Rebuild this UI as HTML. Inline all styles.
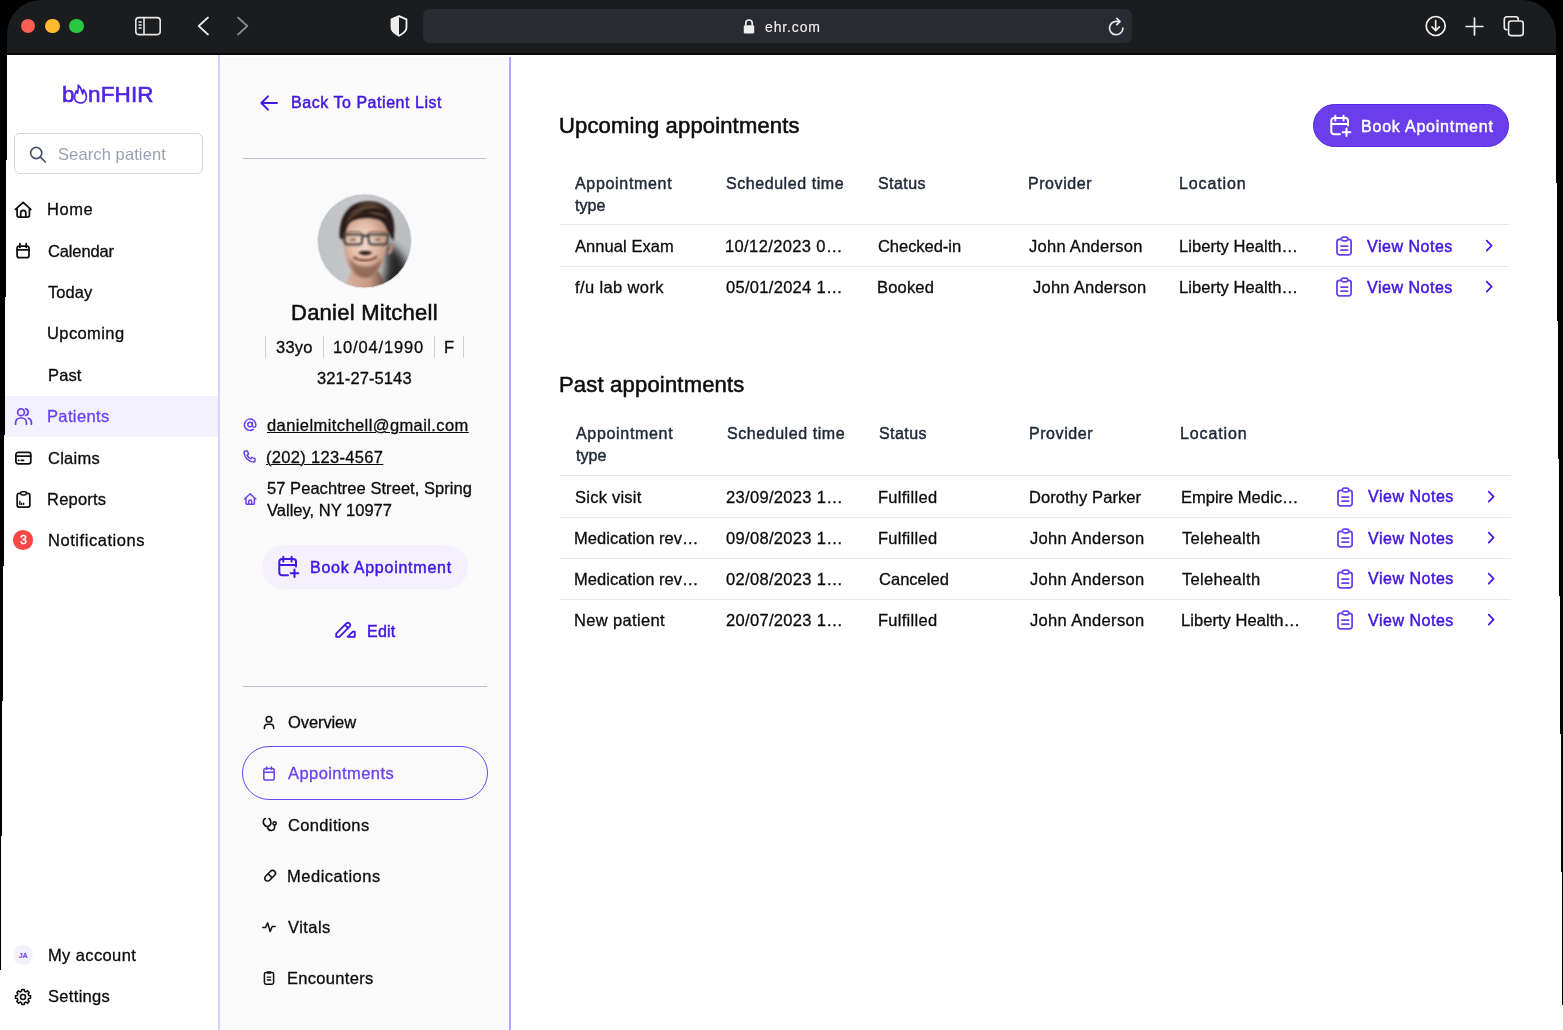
<!DOCTYPE html>
<html><head><meta charset="utf-8"><title>EHR</title>
<style>
html,body{margin:0;padding:0;}
body{width:1563px;height:1030px;overflow:hidden;background:#000;position:relative;font-family:"Liberation Sans",sans-serif;}
.a{position:absolute;}
.t{position:absolute;white-space:nowrap;will-change:transform;}
svg.a{overflow:visible;}
</style></head><body>
<div class="a" style="left:7px;top:0px;width:1549px;height:55px;background:#1b1c1e;border-radius:34px 34px 0 0;"></div>
<div class="a" style="left:7px;top:53px;width:1549px;height:2px;background:#0b0b0c;"></div>
<div class="a" style="left:20.5px;top:18.5px;width:14.8px;height:14.8px;border-radius:50%;background:#fe5f57;"></div>
<div class="a" style="left:44.8px;top:18.5px;width:14.8px;height:14.8px;border-radius:50%;background:#febc2e;"></div>
<div class="a" style="left:69.1px;top:18.5px;width:14.8px;height:14.8px;border-radius:50%;background:#28c840;"></div>
<svg class="a" style="left:134px;top:16px;" width="28" height="20" viewBox="0 0 28 20" fill="none"><rect x="1.8" y="1.6" width="24.4" height="17" rx="3" stroke="#e6e6e6" stroke-width="1.6"/><line x1="10" y1="1.6" x2="10" y2="18.6" stroke="#e6e6e6" stroke-width="1.6"/><path d="M4.6 6h3M4.6 9h3M4.6 12h3" stroke="#e6e6e6" stroke-width="1.3"/></svg>
<svg class="a" style="left:194px;top:14px;" width="20" height="24" viewBox="0 0 20 24" fill="none"><path d="M14 3.5 L4.7 12 L14 20.5" stroke="#e8e8e8" stroke-width="1.7" stroke-linecap="round" stroke-linejoin="round"/></svg>
<svg class="a" style="left:232px;top:14px;" width="20" height="24" viewBox="0 0 20 24" fill="none"><path d="M6 3.5 L15.3 12 L6 20.5" stroke="#8a8a8c" stroke-width="1.7" stroke-linecap="round" stroke-linejoin="round"/></svg>
<svg class="a" style="left:389px;top:14px;" width="20" height="24" viewBox="0 0 20 24" fill="none"><path d="M10 2.2 L17.5 5.3 V13.5 C17.5 17 14.5 19.5 10 21.8 C5.5 19.5 2.5 17 2.5 13.5 V5.3 Z" stroke="#f2f2f2" stroke-width="1.8" stroke-linejoin="round"/><path d="M10 2.2 L2.5 5.3 V13.5 C2.5 17 5.5 19.5 10 21.8 Z" fill="#ececec"/></svg>
<div class="a" style="left:423px;top:9.2px;width:709px;height:33.8px;background:#2a2b30;border-radius:7px;"></div>
<svg class="a" style="left:742px;top:18px;" width="14" height="17" viewBox="0 0 14 17" fill="none"><path d="M3.8 7.5 V5.2 A3.2 3.2 0 0 1 10.2 5.2 V7.5" stroke="#eee" stroke-width="1.7"/><rect x="1.8" y="7.2" width="10.4" height="8.4" rx="1.4" fill="#efefef"/></svg>
<div class="t " style="left:764.98px;top:20.45px;font-size:14px;line-height:14px;font-weight:400;color:#f0f0f0;-webkit-text-stroke:0.15px #f0f0f0;letter-spacing:0.869px;">ehr.com</div>
<svg class="a" style="left:1106.2px;top:15.3px;" width="22" height="22" viewBox="0 0 22 22" fill="none"><path d="M16.9 13.2 A6.7 6.7 0 1 1 11.2 6.4 L13.5 6.4" stroke="#e8e8e8" stroke-width="1.7" stroke-linecap="round"/><path d="M10.8 3.4 L14 6.5 L10.8 9.6" stroke="#e8e8e8" stroke-width="1.7" stroke-linecap="round" stroke-linejoin="round"/></svg>
<svg class="a" style="left:1424px;top:14px;" width="24" height="24" viewBox="0 0 24 24" fill="none"><circle cx="11.7" cy="12" r="9.5" stroke="#f0f0f0" stroke-width="1.7"/><path d="M11.7 6.5 V16.4 M8 12.9 L11.7 16.6 L15.4 12.9" stroke="#f0f0f0" stroke-width="1.6" stroke-linecap="round" stroke-linejoin="round"/></svg>
<svg class="a" style="left:1464px;top:16px;" width="22" height="22" viewBox="0 0 22 22" fill="none"><path d="M10.5 2.2 V19 M2.1 10.5 H18.9" stroke="#f0f0f0" stroke-width="1.7" stroke-linecap="round"/></svg>
<svg class="a" style="left:1500px;top:12px;" width="28" height="28" viewBox="0 0 28 28" fill="none"><path d="M7.5 17.8 H6.8 A2.5 2.5 0 0 1 4.3 15.3 V7.3 A2.5 2.5 0 0 1 6.8 4.8 H15.7 A2.5 2.5 0 0 1 18.2 7.3 V8.5" stroke="#eee" stroke-width="1.6"/><rect x="8.6" y="9" width="14.6" height="14.6" rx="2.5" stroke="#eee" stroke-width="1.6"/></svg>
<div class="a" style="left:0px;top:55px;width:1563px;height:975px;background:#ffffff;"></div>
<div class="a" style="left:219.5px;top:57px;width:287.5px;height:973px;background:#fafafa;"></div>
<div class="a" style="left:218px;top:55px;width:1.5px;height:975px;background:#dbd1fc;"></div>
<div class="a" style="left:509px;top:57px;width:1.6px;height:973px;background:#b7a2fb;"></div>
<div class="a" style="left:0px;top:395.6px;width:218px;height:41.3px;background:#f4f1fe;"></div>
<div class="t " style="left:61.60px;top:83.55px;font-size:22.5px;line-height:22.5px;font-weight:400;color:#4f23e6;-webkit-text-stroke:0.6px #4f23e6;">b</div>
<svg class="a" style="left:70px;top:80px;" width="22" height="28" viewBox="0 0 22 28" fill="none"><path d="M10.3 23 C6.8 23 4.6 20.6 4.6 17.6 C4.6 15 5.4 12.9 6.3 10.8 L7.5 13.2 C8.2 10.6 8.4 7.8 8.2 5 C10.6 7.4 12.1 10.4 12.7 14 L13.6 9.6 C15.4 11.6 16.4 14.2 16.4 17 C16.4 20.6 13.8 23 10.3 23 Z" stroke="#4f23e6" stroke-width="1.6" stroke-linejoin="round"/><path d="M6.3 10.8 L7.5 13.2 C8.2 10.6 8.4 7.8 8.2 5 C8.4 8.8 7.6 12.2 5.6 15.2 Z" fill="#4f23e6"/></svg>
<div class="t " style="left:88.40px;top:83.55px;font-size:22.5px;line-height:22.5px;font-weight:400;color:#4f23e6;-webkit-text-stroke:0.6px #4f23e6;letter-spacing:0.136px;">nFHIR</div>
<div class="a" style="left:13.5px;top:133.4px;width:189.3px;height:40.4px;box-sizing:border-box;border:1.3px solid #d0d5dd;border-radius:6px;background:#fff;"></div>
<svg class="a" style="left:26px;top:146px;" width="24" height="20" viewBox="0 0 24 20" fill="none"><circle cx="10.2" cy="7" r="5.6" stroke="#475467" stroke-width="1.7"/><path d="M14.4 11.2 L19.2 16" stroke="#475467" stroke-width="1.7" stroke-linecap="round"/></svg>
<div class="t " style="left:57.70px;top:145.63px;font-size:16.5px;line-height:16.5px;font-weight:400;color:#98a2b3;letter-spacing:0.106px;">Search patient</div>
<div class="t " style="left:47.45px;top:201.43px;font-size:16.5px;line-height:16.5px;font-weight:400;color:#0b0b0d;-webkit-text-stroke:0.3px #0b0b0d;letter-spacing:0.521px;">Home</div>
<div class="t " style="left:48.15px;top:242.93px;font-size:16.5px;line-height:16.5px;font-weight:400;color:#0b0b0d;-webkit-text-stroke:0.3px #0b0b0d;letter-spacing:-0.138px;">Calendar</div>
<div class="t " style="left:47.85px;top:284.23px;font-size:16.5px;line-height:16.5px;font-weight:400;color:#0b0b0d;-webkit-text-stroke:0.3px #0b0b0d;letter-spacing:0.030px;">Today</div>
<div class="t " style="left:47.15px;top:325.33px;font-size:16.5px;line-height:16.5px;font-weight:400;color:#0b0b0d;-webkit-text-stroke:0.3px #0b0b0d;letter-spacing:0.399px;">Upcoming</div>
<div class="t " style="left:47.55px;top:367.03px;font-size:16.5px;line-height:16.5px;font-weight:400;color:#0b0b0d;-webkit-text-stroke:0.3px #0b0b0d;letter-spacing:0.123px;">Past</div>
<div class="t " style="left:47.25px;top:408.33px;font-size:16.5px;line-height:16.5px;font-weight:400;color:#6941f0;-webkit-text-stroke:0.3px #6941f0;letter-spacing:0.362px;">Patients</div>
<div class="t " style="left:48.15px;top:449.53px;font-size:16.5px;line-height:16.5px;font-weight:400;color:#0b0b0d;-webkit-text-stroke:0.3px #0b0b0d;letter-spacing:0.246px;">Claims</div>
<div class="t " style="left:47.15px;top:490.93px;font-size:16.5px;line-height:16.5px;font-weight:400;color:#0b0b0d;-webkit-text-stroke:0.3px #0b0b0d;letter-spacing:0.213px;">Reports</div>
<div class="t " style="left:47.85px;top:531.93px;font-size:16.5px;line-height:16.5px;font-weight:400;color:#0b0b0d;-webkit-text-stroke:0.3px #0b0b0d;letter-spacing:0.548px;">Notifications</div>
<svg class="a" style="left:13px;top:200px;" width="20" height="20" viewBox="0 0 20 20" fill="none"><path d="M2.4 9.4 L10.2 2.4 L17.8 9.4 M4.1 7.9 V15.3 A1.8 1.8 0 0 0 5.9 17.1 H14.6 A1.8 1.8 0 0 0 16.4 15.3 V7.9 M7.7 17.1 V12.8 A2.55 2.55 0 0 1 12.8 12.8 V17.1" stroke="#101010" stroke-width="1.75" stroke-linecap="round" stroke-linejoin="round"/></svg>
<svg class="a" style="left:13px;top:241px;" width="20" height="20" viewBox="0 0 20 20" fill="none"><rect x="4.1" y="5" width="11.9" height="11.7" rx="2.2" stroke="#101010" stroke-width="1.75"/><path d="M4.1 8.9 H16 M6.9 2.6 V6.4 M13.2 2.6 V6.4" stroke="#101010" stroke-width="1.75" stroke-linecap="round"/></svg>
<svg class="a" style="left:13px;top:406px;" width="20" height="20" viewBox="0 0 20 20" fill="none"><circle cx="8" cy="6.2" r="3.4" stroke="#6941f0" stroke-width="1.7"/><path d="M2.6 18.2 V16.6 A4.6 4.6 0 0 1 7.2 12 H8.8 A4.6 4.6 0 0 1 13.4 16.6 V18.2" stroke="#6941f0" stroke-width="1.7" stroke-linecap="round"/><path d="M12.6 2.9 A3.4 3.4 0 0 1 12.6 9.5 M15.4 12.2 A4.6 4.6 0 0 1 18.4 16.5 V18.2" stroke="#6941f0" stroke-width="1.7" stroke-linecap="round"/></svg>
<svg class="a" style="left:13px;top:448px;" width="20" height="20" viewBox="0 0 20 20" fill="none"><rect x="2.9" y="4.4" width="14.9" height="11.5" rx="2.3" stroke="#101010" stroke-width="1.75"/><path d="M2.9 8.2 H17.8 M5.4 12.3 H5.9 M8.2 12.3 H10.6" stroke="#101010" stroke-width="1.75" stroke-linecap="round"/></svg>
<svg class="a" style="left:13px;top:490px;" width="20" height="20" viewBox="0 0 20 20" fill="none"><path d="M7.4 3.4 H6.1 A1.9 1.9 0 0 0 4.2 5.3 V15.3 A1.9 1.9 0 0 0 6.1 17.2 H14.9 A1.9 1.9 0 0 0 16.8 15.3 V5.3 A1.9 1.9 0 0 0 14.9 3.4 H13.6" stroke="#101010" stroke-width="1.75"/><rect x="7.6" y="1.7" width="5.8" height="3.3" rx="1.65" stroke="#101010" stroke-width="1.6"/><path d="M6.9 11.4 V14.4 M8.6 13.4 V14.4 M10.6 13.1 V14.4" stroke="#101010" stroke-width="1.4" stroke-linecap="round"/></svg>
<div class="a" style="left:13.2px;top:530.3px;width:19.6px;height:19.6px;border-radius:50%;background:#fa4747;"></div>
<div class="t " style="left:19.55px;top:533.62px;font-size:12.5px;line-height:12.5px;font-weight:400;color:#ffffff;-webkit-text-stroke:0.3px #ffffff;">3</div>
<div class="a" style="left:13.3px;top:945.3px;width:19.4px;height:19.4px;border-radius:50%;background:#f4f0fe;color:#6941f0;font-size:7px;font-weight:700;line-height:21px;text-align:center;letter-spacing:-0.3px">JA</div>
<div class="t " style="left:47.75px;top:947.03px;font-size:16.5px;line-height:16.5px;font-weight:400;color:#0b0b0d;-webkit-text-stroke:0.3px #0b0b0d;letter-spacing:0.379px;">My account</div>
<svg class="a" style="left:13.1px;top:987px;" width="20" height="20" viewBox="0 0 20 20" fill="none"><path d="M8.81 2.49 L11.19 2.49 L11.53 4.30 L12.95 4.89 L14.47 3.85 L16.15 5.53 L15.11 7.05 L15.70 8.47 L17.51 8.81 L17.51 11.19 L15.70 11.53 L15.11 12.95 L16.15 14.47 L14.47 16.15 L12.95 15.11 L11.53 15.70 L11.19 17.51 L8.81 17.51 L8.47 15.70 L7.05 15.11 L5.53 16.15 L3.85 14.47 L4.89 12.95 L4.30 11.53 L2.49 11.19 L2.49 8.81 L4.30 8.47 L4.89 7.05 L3.85 5.53 L5.53 3.85 L7.05 4.89 L8.47 4.30 Z" stroke="#101010" stroke-width="1.6" stroke-linejoin="round"/><circle cx="10" cy="10" r="2.5" stroke="#101010" stroke-width="1.6"/></svg>
<div class="t " style="left:48.25px;top:988.43px;font-size:16.5px;line-height:16.5px;font-weight:400;color:#0b0b0d;-webkit-text-stroke:0.3px #0b0b0d;letter-spacing:0.319px;">Settings</div>
<svg class="a" style="left:257px;top:92px;" width="24" height="22" viewBox="0 0 24 22" fill="none"><path d="M20 11 H5 M11 4.4 L4.4 11 L11 17.6" stroke="#4318e0" stroke-width="2" stroke-linecap="round" stroke-linejoin="round"/></svg>
<div class="t " style="left:291.03px;top:95.35px;font-size:16px;line-height:16px;font-weight:400;color:#4318e0;-webkit-text-stroke:0.45px #4318e0;letter-spacing:0.541px;">Back To Patient List</div>
<div class="a" style="left:242.6px;top:157.6px;width:243.6px;height:1.6px;background:#bcc3ce;"></div>
<svg class="a" style="left:317px;top:194px" width="95" height="95" viewBox="0 0 95 95">
<defs><clipPath id="avc"><circle cx="47.5" cy="47" r="47"/></clipPath>
<filter id="bl1" x="-30%" y="-30%" width="160%" height="160%"><feGaussianBlur stdDeviation="0.8"/></filter>
<filter id="bl2" x="-30%" y="-30%" width="160%" height="160%"><feGaussianBlur stdDeviation="1.8"/></filter>
<filter id="bl3" x="-50%" y="-50%" width="200%" height="200%"><feGaussianBlur stdDeviation="4"/></filter>
<linearGradient id="bgG" x1="0" y1="0" x2="1" y2="0"><stop offset="0" stop-color="#bfc1c5"/><stop offset=".5" stop-color="#c6c8cc"/><stop offset="1" stop-color="#b9bbbf"/></linearGradient>
<radialGradient id="skin" cx=".45" cy=".42" r=".62"><stop offset="0" stop-color="#f2dccf"/><stop offset=".5" stop-color="#e2bba6"/><stop offset=".85" stop-color="#c39580"/><stop offset="1" stop-color="#9a6f5c"/></radialGradient>
<linearGradient id="neckG" x1="0" y1="0" x2="1" y2="0"><stop offset="0" stop-color="#d9b09b"/><stop offset=".6" stop-color="#c89a85"/><stop offset="1" stop-color="#5d463c"/></linearGradient>
</defs>
<g clip-path="url(#avc)">
<rect width="95" height="95" fill="url(#bgG)"/>
<path d="M66 48 C80 52 90 64 92 80 C90 88 84 94 70 96 L62 96 C70 82 72 64 66 48 Z" fill="#262628" filter="url(#bl3)"/>
<path d="M29 96 C30 84 34 72 48 72 C62 72 67 84 69 96 Z" fill="url(#neckG)" filter="url(#bl1)"/>
<path d="M24 47 C23 41 24 37 26 36 L28 48 Z M74.6 49 C76 47 77 52 75 58 C74 60 72 61 70 60 Z" fill="#b88a74" filter="url(#bl1)"/>
<path d="M26.5 36 C25.5 54 28.5 70 37 80 C41 84 54 84.5 58 80.5 C67 71 71 54 70.5 36 C66 26 57 22 48 22 C39 22 30 26 26.5 36 Z" fill="url(#skin)" filter="url(#bl1)"/>
<path d="M32 64 C34 75 40 83 48 83.5 C56 83.5 62 76 65 64 C61 70 56 72.5 48.5 72.5 C41 72.5 36 70 32 64 Z" fill="#7a5a48" opacity=".7" filter="url(#bl2)"/>
<path d="M41.5 58.5 C44 56.5 52 56.5 55 58.5 C53 62 44 62 41.5 58.5 Z" fill="#2e1f1a" filter="url(#bl1)"/>
<path d="M37 63.5 C43 67.5 53 67.5 59.5 63" stroke="#6e3a34" stroke-width="2" fill="none" stroke-linecap="round" filter="url(#bl1)"/>
<path d="M22.8 44 C21.5 30 26 16 38 10 C50 5 66 7 73 17 C78 25 78 37 76.5 47 C74 44 72 40 70 36 C68 30 65 27 61 25.5 C53 23 42 23.5 35 27 C30 30 28.5 36 28 44 C26 45 24 45 22.8 44 Z" fill="#2b1f17" filter="url(#bl1)"/>
<path d="M31 22 C39 12 56 9 67 15 C57 13 45 14 31 22 Z M38 13 C47 8 58 8 66 12 C58 10.5 48 10.5 38 13 Z M28 30 C31 23 38 18 47 17 C39 20 32 25 28 30 Z M50 19 C58 17 66 19 71 24 C64 21 57 20 50 19 Z" fill="#7d624c" opacity=".8" filter="url(#bl1)"/>
<g stroke="#3a3a3e" stroke-width="2" fill="none" filter="url(#bl1)"><path d="M26.5 40.5 H45.5 L44.8 48.5 C44.4 50 43.5 50.5 42 50.5 H30.5 C29 50.5 28 49.6 27.7 48 Z"/><path d="M51 40.5 H71.5 L70.2 48 C69.8 49.6 68.8 50.5 67.3 50.5 H55 C53.5 50.5 52.6 50 52.2 48.5 Z"/><path d="M45.5 42 H51"/></g>
<path d="M29 39 C33 37 40 37 44 38.5 M52 38.5 C57 37 64 37 69 39" stroke="#4a3428" stroke-width="1.2" opacity=".6" fill="none" filter="url(#bl1)"/>
<ellipse cx="36" cy="45.5" rx="3" ry="1.5" fill="#5d4a42" opacity=".6" filter="url(#bl1)"/>
<ellipse cx="61" cy="45.5" rx="3" ry="1.5" fill="#5d4a42" opacity=".6" filter="url(#bl1)"/>
<path d="M48.5 46 V55" stroke="#f8e8de" stroke-width="2.2" opacity=".7" filter="url(#bl1)"/>
</g>
<circle cx="47.5" cy="47" r="47" stroke="#e8eaed" stroke-width="1" fill="none"/>
</svg>
<div class="t " style="left:291.07px;top:301.67px;font-size:22px;line-height:22px;font-weight:400;color:#0d0d10;-webkit-text-stroke:0.55px #0d0d10;letter-spacing:0.249px;">Daniel Mitchell</div>
<div class="a" style="left:264.7px;top:336px;width:1.4px;height:21.6px;background:#cbd0d8;"></div>
<div class="a" style="left:322.5px;top:336px;width:1.4px;height:21.6px;background:#cbd0d8;"></div>
<div class="a" style="left:433.7px;top:336px;width:1.4px;height:21.6px;background:#cbd0d8;"></div>
<div class="a" style="left:462.90000000000003px;top:336px;width:1.4px;height:21.6px;background:#cbd0d8;"></div>
<div class="t " style="left:275.65px;top:339.03px;font-size:16.5px;line-height:16.5px;font-weight:400;color:#0b0b0d;-webkit-text-stroke:0.3px #0b0b0d;letter-spacing:0.199px;">33yo</div>
<div class="t " style="left:332.85px;top:339.03px;font-size:16.5px;line-height:16.5px;font-weight:400;color:#0b0b0d;-webkit-text-stroke:0.3px #0b0b0d;letter-spacing:0.844px;">10/04/1990</div>
<div class="t " style="left:443.65px;top:339.03px;font-size:16.5px;line-height:16.5px;font-weight:400;color:#0b0b0d;-webkit-text-stroke:0.3px #0b0b0d;">F</div>
<div class="t " style="left:316.85px;top:370.43px;font-size:16.5px;line-height:16.5px;font-weight:400;color:#0b0b0d;-webkit-text-stroke:0.3px #0b0b0d;letter-spacing:0.100px;">321-27-5143</div>
<svg class="a" style="left:241px;top:417px;" width="18" height="18" viewBox="0 0 18 18" fill="none"><circle cx="9.1" cy="7.6" r="2.3" stroke="#6941f0" stroke-width="1.5"/><path d="M11.4 5.4 V8.6 A1.7 1.7 0 0 0 14.8 8.6 V7.6 A5.7 5.7 0 1 0 12.2 12.5" stroke="#6941f0" stroke-width="1.5" stroke-linecap="round"/></svg>
<div class="t " style="left:267.45px;top:416.63px;font-size:16.5px;line-height:16.5px;font-weight:400;color:#0b0b0d;-webkit-text-stroke:0.3px #0b0b0d;letter-spacing:0.411px;text-decoration:underline;text-underline-offset:1px;text-decoration-thickness:1px;">danielmitchell@gmail.com</div>
<svg class="a" style="left:241px;top:448px;" width="18" height="18" viewBox="0 0 18 18" fill="none"><path d="M4.3 3 H6.4 L7.6 6.1 L6.1 7.1 A7 7 0 0 0 9.9 10.9 L10.9 9.4 L14 10.6 V12.7 A1.4 1.4 0 0 1 12.6 14.1 C7.6 13.8 3.3 9.5 3 4.4 A1.4 1.4 0 0 1 4.3 3 Z" stroke="#6941f0" stroke-width="1.5" stroke-linejoin="round"/></svg>
<div class="t " style="left:266.45px;top:448.53px;font-size:16.5px;line-height:16.5px;font-weight:400;color:#0b0b0d;-webkit-text-stroke:0.3px #0b0b0d;letter-spacing:0.319px;text-decoration:underline;text-underline-offset:1px;text-decoration-thickness:1px;">(202) 123-4567</div>
<svg class="a" style="left:241px;top:491px;" width="18" height="18" viewBox="0 0 18 18" fill="none"><path d="M3.6 8 L9.2 2.8 L14.8 8 M5 6.8 V12 A1.2 1.2 0 0 0 6.2 13.2 H12.2 A1.2 1.2 0 0 0 13.4 12 V6.8 M7.7 13.2 V10.6 A1.5 1.5 0 0 1 10.7 10.6 V13.2" stroke="#6941f0" stroke-width="1.5" stroke-linecap="round" stroke-linejoin="round"/></svg>
<div class="t " style="left:267.45px;top:480.03px;font-size:16.5px;line-height:16.5px;font-weight:400;color:#0b0b0d;-webkit-text-stroke:0.3px #0b0b0d;letter-spacing:0.052px;">57 Peachtree Street, Spring</div>
<div class="t " style="left:267.45px;top:501.63px;font-size:16.5px;line-height:16.5px;font-weight:400;color:#0b0b0d;-webkit-text-stroke:0.3px #0b0b0d;letter-spacing:0.015px;">Valley, NY 10977</div>
<div class="a" style="left:261.7px;top:545.2px;width:206.1px;height:44px;background:#f4f0fe;border-radius:22px;"></div>
<svg class="a" style="left:275.7px;top:554.4px;" width="24" height="24" viewBox="0 0 24 24" fill="none"><path d="M20 12.4 V7.6 A2.6 2.6 0 0 0 17.4 5 H5.9 A2.6 2.6 0 0 0 3.3 7.6 V18.6 A2.6 2.6 0 0 0 5.9 21.2 H12 M3.3 11 H20 M7.3 2.7 V7.6 M15.6 2.7 V7.6 M18.5 15.4 V23 M14.7 19.2 H22.3" stroke="#4318e0" stroke-width="2" stroke-linecap="round" stroke-linejoin="round"/></svg>
<div class="t " style="left:310.03px;top:559.55px;font-size:16px;line-height:16px;font-weight:400;color:#4318e0;-webkit-text-stroke:0.45px #4318e0;letter-spacing:0.750px;">Book Appointment</div>
<svg class="a" style="left:333px;top:618px;" width="24" height="22" viewBox="0 0 24 22" fill="none"><path d="M3.2 18.8 V15.6 L13.6 5.2 A2.3 2.3 0 0 1 16.8 8.4 L6.4 18.8 Z M12 6.8 L15.2 10 M14.6 18.8 L19.8 13.6 H21.8 V18.8 Z" stroke="#4318e0" stroke-width="1.8" stroke-linejoin="round"/></svg>
<div class="t " style="left:367.23px;top:623.65px;font-size:16px;line-height:16px;font-weight:400;color:#4318e0;-webkit-text-stroke:0.45px #4318e0;letter-spacing:0.242px;">Edit</div>
<div class="a" style="left:243px;top:685.5px;width:243.7px;height:1.6px;background:#bcc3ce;"></div>
<svg class="a" style="left:262px;top:714px;" width="14" height="16" viewBox="0 0 14 16" fill="none"><circle cx="7" cy="5.2" r="2.8" stroke="#101010" stroke-width="1.5"/><path d="M2.4 14.6 V13.4 A3.2 3.2 0 0 1 5.6 10.2 H8.4 A3.2 3.2 0 0 1 11.6 13.4 V14.6" stroke="#101010" stroke-width="1.5" stroke-linecap="round"/></svg>
<div class="t " style="left:287.75px;top:714.03px;font-size:16.5px;line-height:16.5px;font-weight:400;color:#0b0b0d;-webkit-text-stroke:0.3px #0b0b0d;letter-spacing:-0.093px;">Overview</div>
<div class="a" style="left:241.8px;top:746.2px;width:245.9px;height:53.5px;box-sizing:border-box;border:1.8px solid #6b47ee;border-radius:27px;"></div>
<svg class="a" style="left:262px;top:765px;" width="14" height="17" viewBox="0 0 14 17" fill="none"><rect x="1.8" y="3.4" width="10.4" height="11.6" rx="1.8" stroke="#6941f0" stroke-width="1.5"/><path d="M1.8 7.2 H12.2 M4.6 2 V4.4 M9.4 2 V4.4" stroke="#6941f0" stroke-width="1.5" stroke-linecap="round"/></svg>
<div class="t " style="left:287.85px;top:765.43px;font-size:16.5px;line-height:16.5px;font-weight:400;color:#6941f0;-webkit-text-stroke:0.3px #6941f0;letter-spacing:0.432px;">Appointments</div>
<svg class="a" style="left:261px;top:816px;" width="16" height="17" viewBox="0 0 16 17" fill="none"><path d="M4.3 2.6 C2.3 3.5 1.7 6 2.8 8 C3.8 9.8 5.9 10.8 7.5 10.2 C9.3 9.5 10.2 7.2 9.7 5.1 C9.4 3.8 8.8 3 8 2.5 M6.5 10.5 C6.9 13 8.6 14.6 10.6 14.5 C12.6 14.4 13.7 12.6 13.6 10.6 V9" stroke="#101010" stroke-width="1.6" stroke-linecap="round"/><circle cx="13.6" cy="7.4" r="1.6" stroke="#101010" stroke-width="1.5"/></svg>
<div class="t " style="left:287.85px;top:816.73px;font-size:16.5px;line-height:16.5px;font-weight:400;color:#0b0b0d;-webkit-text-stroke:0.3px #0b0b0d;letter-spacing:0.354px;">Conditions</div>
<svg class="a" style="left:261.6px;top:867px;" width="16" height="17" viewBox="0 0 16 17" fill="none"><path d="M3.6 13.2 A2.8 2.8 0 0 1 3.6 9.2 L8.6 4.2 A2.8 2.8 0 0 1 12.6 8.2 L7.6 13.2 A2.8 2.8 0 0 1 3.6 13.2 Z M6.1 6.7 L10.1 10.7" stroke="#101010" stroke-width="1.6"/></svg>
<div class="t " style="left:286.85px;top:867.73px;font-size:16.5px;line-height:16.5px;font-weight:400;color:#0b0b0d;-webkit-text-stroke:0.3px #0b0b0d;letter-spacing:0.521px;">Medications</div>
<svg class="a" style="left:261px;top:918px;" width="16" height="17" viewBox="0 0 16 17" fill="none"><path d="M1.8 9.6 H4.4 L6.6 5 L9.2 13.6 L11.2 8.4 H14.2" stroke="#101010" stroke-width="1.5" stroke-linecap="round" stroke-linejoin="round"/></svg>
<div class="t " style="left:287.85px;top:919.03px;font-size:16.5px;line-height:16.5px;font-weight:400;color:#0b0b0d;-webkit-text-stroke:0.3px #0b0b0d;letter-spacing:0.440px;">Vitals</div>
<svg class="a" style="left:261px;top:969px;" width="16" height="17" viewBox="0 0 16 17" fill="none"><rect x="3.4" y="3.6" width="9.2" height="11.6" rx="1.6" stroke="#101010" stroke-width="1.5"/><rect x="5.8" y="2.2" width="4.4" height="2.6" rx=".9" fill="#101010"/><path d="M5.8 8.2 H10.2 M5.8 11 H10.2" stroke="#101010" stroke-width="1.3"/></svg>
<div class="t " style="left:286.85px;top:970.23px;font-size:16.5px;line-height:16.5px;font-weight:400;color:#0b0b0d;-webkit-text-stroke:0.3px #0b0b0d;letter-spacing:0.309px;">Encounters</div>
<div class="t " style="left:559.07px;top:114.87px;font-size:22px;line-height:22px;font-weight:400;color:#0d0d10;-webkit-text-stroke:0.55px #0d0d10;letter-spacing:0.160px;">Upcoming appointments</div>
<div class="a" style="left:1313px;top:103.7px;width:196.4px;height:43.4px;background:#6a3eeb;border:1px solid #5128e6;box-sizing:border-box;border-radius:22px;"></div>
<svg class="a" style="left:1327.5px;top:113px;" width="24" height="24" viewBox="0 0 24 24" fill="none"><path d="M20 12.4 V7.6 A2.6 2.6 0 0 0 17.4 5 H5.9 A2.6 2.6 0 0 0 3.3 7.6 V18.6 A2.6 2.6 0 0 0 5.9 21.2 H12 M3.3 11 H20 M7.3 2.7 V7.6 M15.6 2.7 V7.6 M18.5 15.4 V23 M14.7 19.2 H22.3" stroke="#ffffff" stroke-width="2" stroke-linecap="round" stroke-linejoin="round"/></svg>
<div class="t " style="left:1361.12px;top:118.85px;font-size:16px;line-height:16px;font-weight:400;color:#ffffff;-webkit-text-stroke:0.45px #ffffff;letter-spacing:0.782px;">Book Apointment</div>
<div class="t " style="left:574.73px;top:175.95px;font-size:16px;line-height:16px;font-weight:400;color:#1f2836;-webkit-text-stroke:0.45px #1f2836;letter-spacing:0.676px;">Appointment</div>
<div class="t " style="left:725.83px;top:175.95px;font-size:16px;line-height:16px;font-weight:400;color:#1f2836;-webkit-text-stroke:0.45px #1f2836;letter-spacing:0.558px;">Scheduled time</div>
<div class="t " style="left:877.73px;top:175.95px;font-size:16px;line-height:16px;font-weight:400;color:#1f2836;-webkit-text-stroke:0.45px #1f2836;letter-spacing:0.438px;">Status</div>
<div class="t " style="left:1028.02px;top:175.95px;font-size:16px;line-height:16px;font-weight:400;color:#1f2836;-webkit-text-stroke:0.45px #1f2836;letter-spacing:0.557px;">Provider</div>
<div class="t " style="left:1179.12px;top:175.95px;font-size:16px;line-height:16px;font-weight:400;color:#1f2836;-webkit-text-stroke:0.45px #1f2836;letter-spacing:0.879px;">Location</div>
<div class="t " style="left:574.73px;top:197.75px;font-size:16px;line-height:16px;font-weight:400;color:#1f2836;-webkit-text-stroke:0.45px #1f2836;letter-spacing:0.069px;">type</div>
<div class="a" style="left:559.6px;top:224.3px;width:949.8000000000001px;height:1.2px;background:#e4e7ec;"></div>
<div class="a" style="left:559.6px;top:265.59999999999997px;width:949.8000000000001px;height:1.2px;background:#e4e7ec;"></div>
<div class="t " style="left:574.65px;top:238.13px;font-size:16.5px;line-height:16.5px;font-weight:400;color:#0b0b0d;-webkit-text-stroke:0.3px #0b0b0d;letter-spacing:0.061px;">Annual Exam</div>
<div class="t " style="left:724.65px;top:238.13px;font-size:16.5px;line-height:16.5px;font-weight:400;color:#0b0b0d;-webkit-text-stroke:0.3px #0b0b0d;letter-spacing:0.380px;">10/12/2023 0…</div>
<div class="t " style="left:877.65px;top:238.13px;font-size:16.5px;line-height:16.5px;font-weight:400;color:#0b0b0d;-webkit-text-stroke:0.3px #0b0b0d;letter-spacing:-0.042px;">Checked-in</div>
<div class="t " style="left:1028.95px;top:238.13px;font-size:16.5px;line-height:16.5px;font-weight:400;color:#0b0b0d;-webkit-text-stroke:0.3px #0b0b0d;letter-spacing:0.282px;">John Anderson</div>
<div class="t " style="left:1179.05px;top:238.13px;font-size:16.5px;line-height:16.5px;font-weight:400;color:#0b0b0d;-webkit-text-stroke:0.3px #0b0b0d;letter-spacing:0.050px;">Liberty Health…</div>
<svg class="a" style="left:1333px;top:236.1px;" width="22" height="22" viewBox="0 0 22 22" fill="none"><path d="M8.2 3.4 H6.4 A2.4 2.4 0 0 0 4 5.8 V16.5 A2.4 2.4 0 0 0 6.4 18.9 H15.7 A2.4 2.4 0 0 0 18.1 16.5 V5.8 A2.4 2.4 0 0 0 15.7 3.4 H14.8" stroke="#6941f0" stroke-width="1.8"/><rect x="8.3" y="1.1" width="6.5" height="3.7" rx="1.85" stroke="#6941f0" stroke-width="1.7"/><path d="M8 10.1 H14.6 M8 14.2 H14.6" stroke="#6941f0" stroke-width="1.8" stroke-linecap="round"/></svg>
<div class="t " style="left:1366.72px;top:238.95px;font-size:16px;line-height:16px;font-weight:400;color:#4318e0;-webkit-text-stroke:0.45px #4318e0;letter-spacing:0.524px;">View Notes</div>
<svg class="a" style="left:1481.0px;top:238.1px;" width="16" height="16" viewBox="0 0 16 16" fill="none"><path d="M5.7 2.7 L10.6 7.7 L5.7 12.7" stroke="#4318e0" stroke-width="1.7" stroke-linecap="round" stroke-linejoin="round"/></svg>
<div class="t " style="left:574.65px;top:278.93px;font-size:16.5px;line-height:16.5px;font-weight:400;color:#0b0b0d;-webkit-text-stroke:0.3px #0b0b0d;letter-spacing:0.380px;">f/u lab work</div>
<div class="t " style="left:725.65px;top:278.93px;font-size:16.5px;line-height:16.5px;font-weight:400;color:#0b0b0d;-webkit-text-stroke:0.3px #0b0b0d;letter-spacing:0.297px;">05/01/2024 1…</div>
<div class="t " style="left:876.65px;top:278.93px;font-size:16.5px;line-height:16.5px;font-weight:400;color:#0b0b0d;-webkit-text-stroke:0.3px #0b0b0d;letter-spacing:0.183px;">Booked</div>
<div class="t " style="left:1033.15px;top:278.93px;font-size:16.5px;line-height:16.5px;font-weight:400;color:#0b0b0d;-webkit-text-stroke:0.3px #0b0b0d;letter-spacing:0.257px;">John Anderson</div>
<div class="t " style="left:1179.05px;top:278.93px;font-size:16.5px;line-height:16.5px;font-weight:400;color:#0b0b0d;-webkit-text-stroke:0.3px #0b0b0d;letter-spacing:0.050px;">Liberty Health…</div>
<svg class="a" style="left:1333px;top:276.9px;" width="22" height="22" viewBox="0 0 22 22" fill="none"><path d="M8.2 3.4 H6.4 A2.4 2.4 0 0 0 4 5.8 V16.5 A2.4 2.4 0 0 0 6.4 18.9 H15.7 A2.4 2.4 0 0 0 18.1 16.5 V5.8 A2.4 2.4 0 0 0 15.7 3.4 H14.8" stroke="#6941f0" stroke-width="1.8"/><rect x="8.3" y="1.1" width="6.5" height="3.7" rx="1.85" stroke="#6941f0" stroke-width="1.7"/><path d="M8 10.1 H14.6 M8 14.2 H14.6" stroke="#6941f0" stroke-width="1.8" stroke-linecap="round"/></svg>
<div class="t " style="left:1366.72px;top:279.75px;font-size:16px;line-height:16px;font-weight:400;color:#4318e0;-webkit-text-stroke:0.45px #4318e0;letter-spacing:0.524px;">View Notes</div>
<svg class="a" style="left:1481.0px;top:278.9px;" width="16" height="16" viewBox="0 0 16 16" fill="none"><path d="M5.7 2.7 L10.6 7.7 L5.7 12.7" stroke="#4318e0" stroke-width="1.7" stroke-linecap="round" stroke-linejoin="round"/></svg>
<div class="t " style="left:559.07px;top:373.87px;font-size:22px;line-height:22px;font-weight:400;color:#0d0d10;-webkit-text-stroke:0.55px #0d0d10;letter-spacing:0.196px;">Past appointments</div>
<div class="t " style="left:575.73px;top:426.15px;font-size:16px;line-height:16px;font-weight:400;color:#1f2836;-webkit-text-stroke:0.45px #1f2836;letter-spacing:0.676px;">Appointment</div>
<div class="t " style="left:726.83px;top:426.15px;font-size:16px;line-height:16px;font-weight:400;color:#1f2836;-webkit-text-stroke:0.45px #1f2836;letter-spacing:0.558px;">Scheduled time</div>
<div class="t " style="left:878.73px;top:426.15px;font-size:16px;line-height:16px;font-weight:400;color:#1f2836;-webkit-text-stroke:0.45px #1f2836;letter-spacing:0.438px;">Status</div>
<div class="t " style="left:1029.02px;top:426.15px;font-size:16px;line-height:16px;font-weight:400;color:#1f2836;-webkit-text-stroke:0.45px #1f2836;letter-spacing:0.557px;">Provider</div>
<div class="t " style="left:1180.12px;top:426.15px;font-size:16px;line-height:16px;font-weight:400;color:#1f2836;-webkit-text-stroke:0.45px #1f2836;letter-spacing:0.879px;">Location</div>
<div class="t " style="left:575.73px;top:447.95px;font-size:16px;line-height:16px;font-weight:400;color:#1f2836;-webkit-text-stroke:0.45px #1f2836;letter-spacing:0.069px;">type</div>
<div class="a" style="left:559.6px;top:475.0px;width:951.4px;height:1.2px;background:#e4e7ec;"></div>
<div class="a" style="left:559.6px;top:516.6px;width:951.4px;height:1.2px;background:#e4e7ec;"></div>
<div class="a" style="left:559.6px;top:557.8px;width:951.4px;height:1.2px;background:#e4e7ec;"></div>
<div class="a" style="left:559.6px;top:599.0px;width:951.4px;height:1.2px;background:#e4e7ec;"></div>
<div class="t " style="left:575.15px;top:488.63px;font-size:16.5px;line-height:16.5px;font-weight:400;color:#0b0b0d;-webkit-text-stroke:0.3px #0b0b0d;letter-spacing:0.235px;">Sick visit</div>
<div class="t " style="left:726.35px;top:488.63px;font-size:16.5px;line-height:16.5px;font-weight:400;color:#0b0b0d;-webkit-text-stroke:0.3px #0b0b0d;letter-spacing:0.322px;">23/09/2023 1…</div>
<div class="t " style="left:877.65px;top:488.63px;font-size:16.5px;line-height:16.5px;font-weight:400;color:#0b0b0d;-webkit-text-stroke:0.3px #0b0b0d;letter-spacing:0.278px;">Fulfilled</div>
<div class="t " style="left:1028.95px;top:488.63px;font-size:16.5px;line-height:16.5px;font-weight:400;color:#0b0b0d;-webkit-text-stroke:0.3px #0b0b0d;letter-spacing:0.088px;">Dorothy Parker</div>
<div class="t " style="left:1180.65px;top:488.63px;font-size:16.5px;line-height:16.5px;font-weight:400;color:#0b0b0d;-webkit-text-stroke:0.3px #0b0b0d;letter-spacing:0.003px;">Empire Medic…</div>
<svg class="a" style="left:1334px;top:486.6px;" width="22" height="22" viewBox="0 0 22 22" fill="none"><path d="M8.2 3.4 H6.4 A2.4 2.4 0 0 0 4 5.8 V16.5 A2.4 2.4 0 0 0 6.4 18.9 H15.7 A2.4 2.4 0 0 0 18.1 16.5 V5.8 A2.4 2.4 0 0 0 15.7 3.4 H14.8" stroke="#6941f0" stroke-width="1.8"/><rect x="8.3" y="1.1" width="6.5" height="3.7" rx="1.85" stroke="#6941f0" stroke-width="1.7"/><path d="M8 10.1 H14.6 M8 14.2 H14.6" stroke="#6941f0" stroke-width="1.8" stroke-linecap="round"/></svg>
<div class="t " style="left:1367.72px;top:489.45px;font-size:16px;line-height:16px;font-weight:400;color:#4318e0;-webkit-text-stroke:0.45px #4318e0;letter-spacing:0.524px;">View Notes</div>
<svg class="a" style="left:1482.5px;top:488.6px;" width="16" height="16" viewBox="0 0 16 16" fill="none"><path d="M5.7 2.7 L10.6 7.7 L5.7 12.7" stroke="#4318e0" stroke-width="1.7" stroke-linecap="round" stroke-linejoin="round"/></svg>
<div class="t " style="left:574.15px;top:529.83px;font-size:16.5px;line-height:16.5px;font-weight:400;color:#0b0b0d;-webkit-text-stroke:0.3px #0b0b0d;letter-spacing:0.057px;">Medication rev…</div>
<div class="t " style="left:726.35px;top:529.83px;font-size:16.5px;line-height:16.5px;font-weight:400;color:#0b0b0d;-webkit-text-stroke:0.3px #0b0b0d;letter-spacing:0.322px;">09/08/2023 1…</div>
<div class="t " style="left:877.65px;top:529.83px;font-size:16.5px;line-height:16.5px;font-weight:400;color:#0b0b0d;-webkit-text-stroke:0.3px #0b0b0d;letter-spacing:0.278px;">Fulfilled</div>
<div class="t " style="left:1029.95px;top:529.83px;font-size:16.5px;line-height:16.5px;font-weight:400;color:#0b0b0d;-webkit-text-stroke:0.3px #0b0b0d;letter-spacing:0.340px;">John Anderson</div>
<div class="t " style="left:1181.65px;top:529.83px;font-size:16.5px;line-height:16.5px;font-weight:400;color:#0b0b0d;-webkit-text-stroke:0.3px #0b0b0d;letter-spacing:0.328px;">Telehealth</div>
<svg class="a" style="left:1334px;top:527.8px;" width="22" height="22" viewBox="0 0 22 22" fill="none"><path d="M8.2 3.4 H6.4 A2.4 2.4 0 0 0 4 5.8 V16.5 A2.4 2.4 0 0 0 6.4 18.9 H15.7 A2.4 2.4 0 0 0 18.1 16.5 V5.8 A2.4 2.4 0 0 0 15.7 3.4 H14.8" stroke="#6941f0" stroke-width="1.8"/><rect x="8.3" y="1.1" width="6.5" height="3.7" rx="1.85" stroke="#6941f0" stroke-width="1.7"/><path d="M8 10.1 H14.6 M8 14.2 H14.6" stroke="#6941f0" stroke-width="1.8" stroke-linecap="round"/></svg>
<div class="t " style="left:1367.72px;top:530.65px;font-size:16px;line-height:16px;font-weight:400;color:#4318e0;-webkit-text-stroke:0.45px #4318e0;letter-spacing:0.524px;">View Notes</div>
<svg class="a" style="left:1482.5px;top:529.8px;" width="16" height="16" viewBox="0 0 16 16" fill="none"><path d="M5.7 2.7 L10.6 7.7 L5.7 12.7" stroke="#4318e0" stroke-width="1.7" stroke-linecap="round" stroke-linejoin="round"/></svg>
<div class="t " style="left:574.15px;top:570.53px;font-size:16.5px;line-height:16.5px;font-weight:400;color:#0b0b0d;-webkit-text-stroke:0.3px #0b0b0d;letter-spacing:0.057px;">Medication rev…</div>
<div class="t " style="left:726.35px;top:570.53px;font-size:16.5px;line-height:16.5px;font-weight:400;color:#0b0b0d;-webkit-text-stroke:0.3px #0b0b0d;letter-spacing:0.322px;">02/08/2023 1…</div>
<div class="t " style="left:878.65px;top:570.53px;font-size:16.5px;line-height:16.5px;font-weight:400;color:#0b0b0d;-webkit-text-stroke:0.3px #0b0b0d;letter-spacing:0.023px;">Canceled</div>
<div class="t " style="left:1029.95px;top:570.53px;font-size:16.5px;line-height:16.5px;font-weight:400;color:#0b0b0d;-webkit-text-stroke:0.3px #0b0b0d;letter-spacing:0.340px;">John Anderson</div>
<div class="t " style="left:1181.65px;top:570.53px;font-size:16.5px;line-height:16.5px;font-weight:400;color:#0b0b0d;-webkit-text-stroke:0.3px #0b0b0d;letter-spacing:0.328px;">Telehealth</div>
<svg class="a" style="left:1334px;top:568.5px;" width="22" height="22" viewBox="0 0 22 22" fill="none"><path d="M8.2 3.4 H6.4 A2.4 2.4 0 0 0 4 5.8 V16.5 A2.4 2.4 0 0 0 6.4 18.9 H15.7 A2.4 2.4 0 0 0 18.1 16.5 V5.8 A2.4 2.4 0 0 0 15.7 3.4 H14.8" stroke="#6941f0" stroke-width="1.8"/><rect x="8.3" y="1.1" width="6.5" height="3.7" rx="1.85" stroke="#6941f0" stroke-width="1.7"/><path d="M8 10.1 H14.6 M8 14.2 H14.6" stroke="#6941f0" stroke-width="1.8" stroke-linecap="round"/></svg>
<div class="t " style="left:1367.72px;top:571.35px;font-size:16px;line-height:16px;font-weight:400;color:#4318e0;-webkit-text-stroke:0.45px #4318e0;letter-spacing:0.524px;">View Notes</div>
<svg class="a" style="left:1482.5px;top:570.5px;" width="16" height="16" viewBox="0 0 16 16" fill="none"><path d="M5.7 2.7 L10.6 7.7 L5.7 12.7" stroke="#4318e0" stroke-width="1.7" stroke-linecap="round" stroke-linejoin="round"/></svg>
<div class="t " style="left:574.15px;top:612.03px;font-size:16.5px;line-height:16.5px;font-weight:400;color:#0b0b0d;-webkit-text-stroke:0.3px #0b0b0d;letter-spacing:0.355px;">New patient</div>
<div class="t " style="left:726.35px;top:612.03px;font-size:16.5px;line-height:16.5px;font-weight:400;color:#0b0b0d;-webkit-text-stroke:0.3px #0b0b0d;letter-spacing:0.322px;">20/07/2023 1…</div>
<div class="t " style="left:877.65px;top:612.03px;font-size:16.5px;line-height:16.5px;font-weight:400;color:#0b0b0d;-webkit-text-stroke:0.3px #0b0b0d;letter-spacing:0.278px;">Fulfilled</div>
<div class="t " style="left:1029.95px;top:612.03px;font-size:16.5px;line-height:16.5px;font-weight:400;color:#0b0b0d;-webkit-text-stroke:0.3px #0b0b0d;letter-spacing:0.340px;">John Anderson</div>
<div class="t " style="left:1180.65px;top:612.03px;font-size:16.5px;line-height:16.5px;font-weight:400;color:#0b0b0d;-webkit-text-stroke:0.3px #0b0b0d;letter-spacing:0.050px;">Liberty Health…</div>
<svg class="a" style="left:1334px;top:610px;" width="22" height="22" viewBox="0 0 22 22" fill="none"><path d="M8.2 3.4 H6.4 A2.4 2.4 0 0 0 4 5.8 V16.5 A2.4 2.4 0 0 0 6.4 18.9 H15.7 A2.4 2.4 0 0 0 18.1 16.5 V5.8 A2.4 2.4 0 0 0 15.7 3.4 H14.8" stroke="#6941f0" stroke-width="1.8"/><rect x="8.3" y="1.1" width="6.5" height="3.7" rx="1.85" stroke="#6941f0" stroke-width="1.7"/><path d="M8 10.1 H14.6 M8 14.2 H14.6" stroke="#6941f0" stroke-width="1.8" stroke-linecap="round"/></svg>
<div class="t " style="left:1367.72px;top:612.85px;font-size:16px;line-height:16px;font-weight:400;color:#4318e0;-webkit-text-stroke:0.45px #4318e0;letter-spacing:0.524px;">View Notes</div>
<svg class="a" style="left:1482.5px;top:612px;" width="16" height="16" viewBox="0 0 16 16" fill="none"><path d="M5.7 2.7 L10.6 7.7 L5.7 12.7" stroke="#4318e0" stroke-width="1.7" stroke-linecap="round" stroke-linejoin="round"/></svg>
<div class="a" style="left:0px;top:0px;width:7px;height:160px;background:#000;"></div>
<div class="a" style="left:0px;top:160px;width:6px;height:137px;background:#000;"></div>
<div class="a" style="left:0px;top:297px;width:5px;height:138px;background:#000;"></div>
<div class="a" style="left:0px;top:435px;width:4px;height:131px;background:#000;"></div>
<div class="a" style="left:0px;top:566px;width:3px;height:135px;background:#000;"></div>
<div class="a" style="left:0px;top:701px;width:2px;height:135px;background:#000;"></div>
<div class="a" style="left:0px;top:836px;width:1px;height:134px;background:#000;"></div>
<div class="a" style="left:1556px;top:0px;width:7px;height:183px;background:#000;"></div>
<div class="a" style="left:1557px;top:183px;width:6px;height:138px;background:#000;"></div>
<div class="a" style="left:1558px;top:321px;width:5px;height:138px;background:#000;"></div>
<div class="a" style="left:1559px;top:459px;width:4px;height:137px;background:#000;"></div>
<div class="a" style="left:1560px;top:596px;width:3px;height:138px;background:#000;"></div>
<div class="a" style="left:1561px;top:734px;width:2px;height:138px;background:#000;"></div>
<div class="a" style="left:1562px;top:872px;width:1px;height:133px;background:#000;"></div>
</body></html>
